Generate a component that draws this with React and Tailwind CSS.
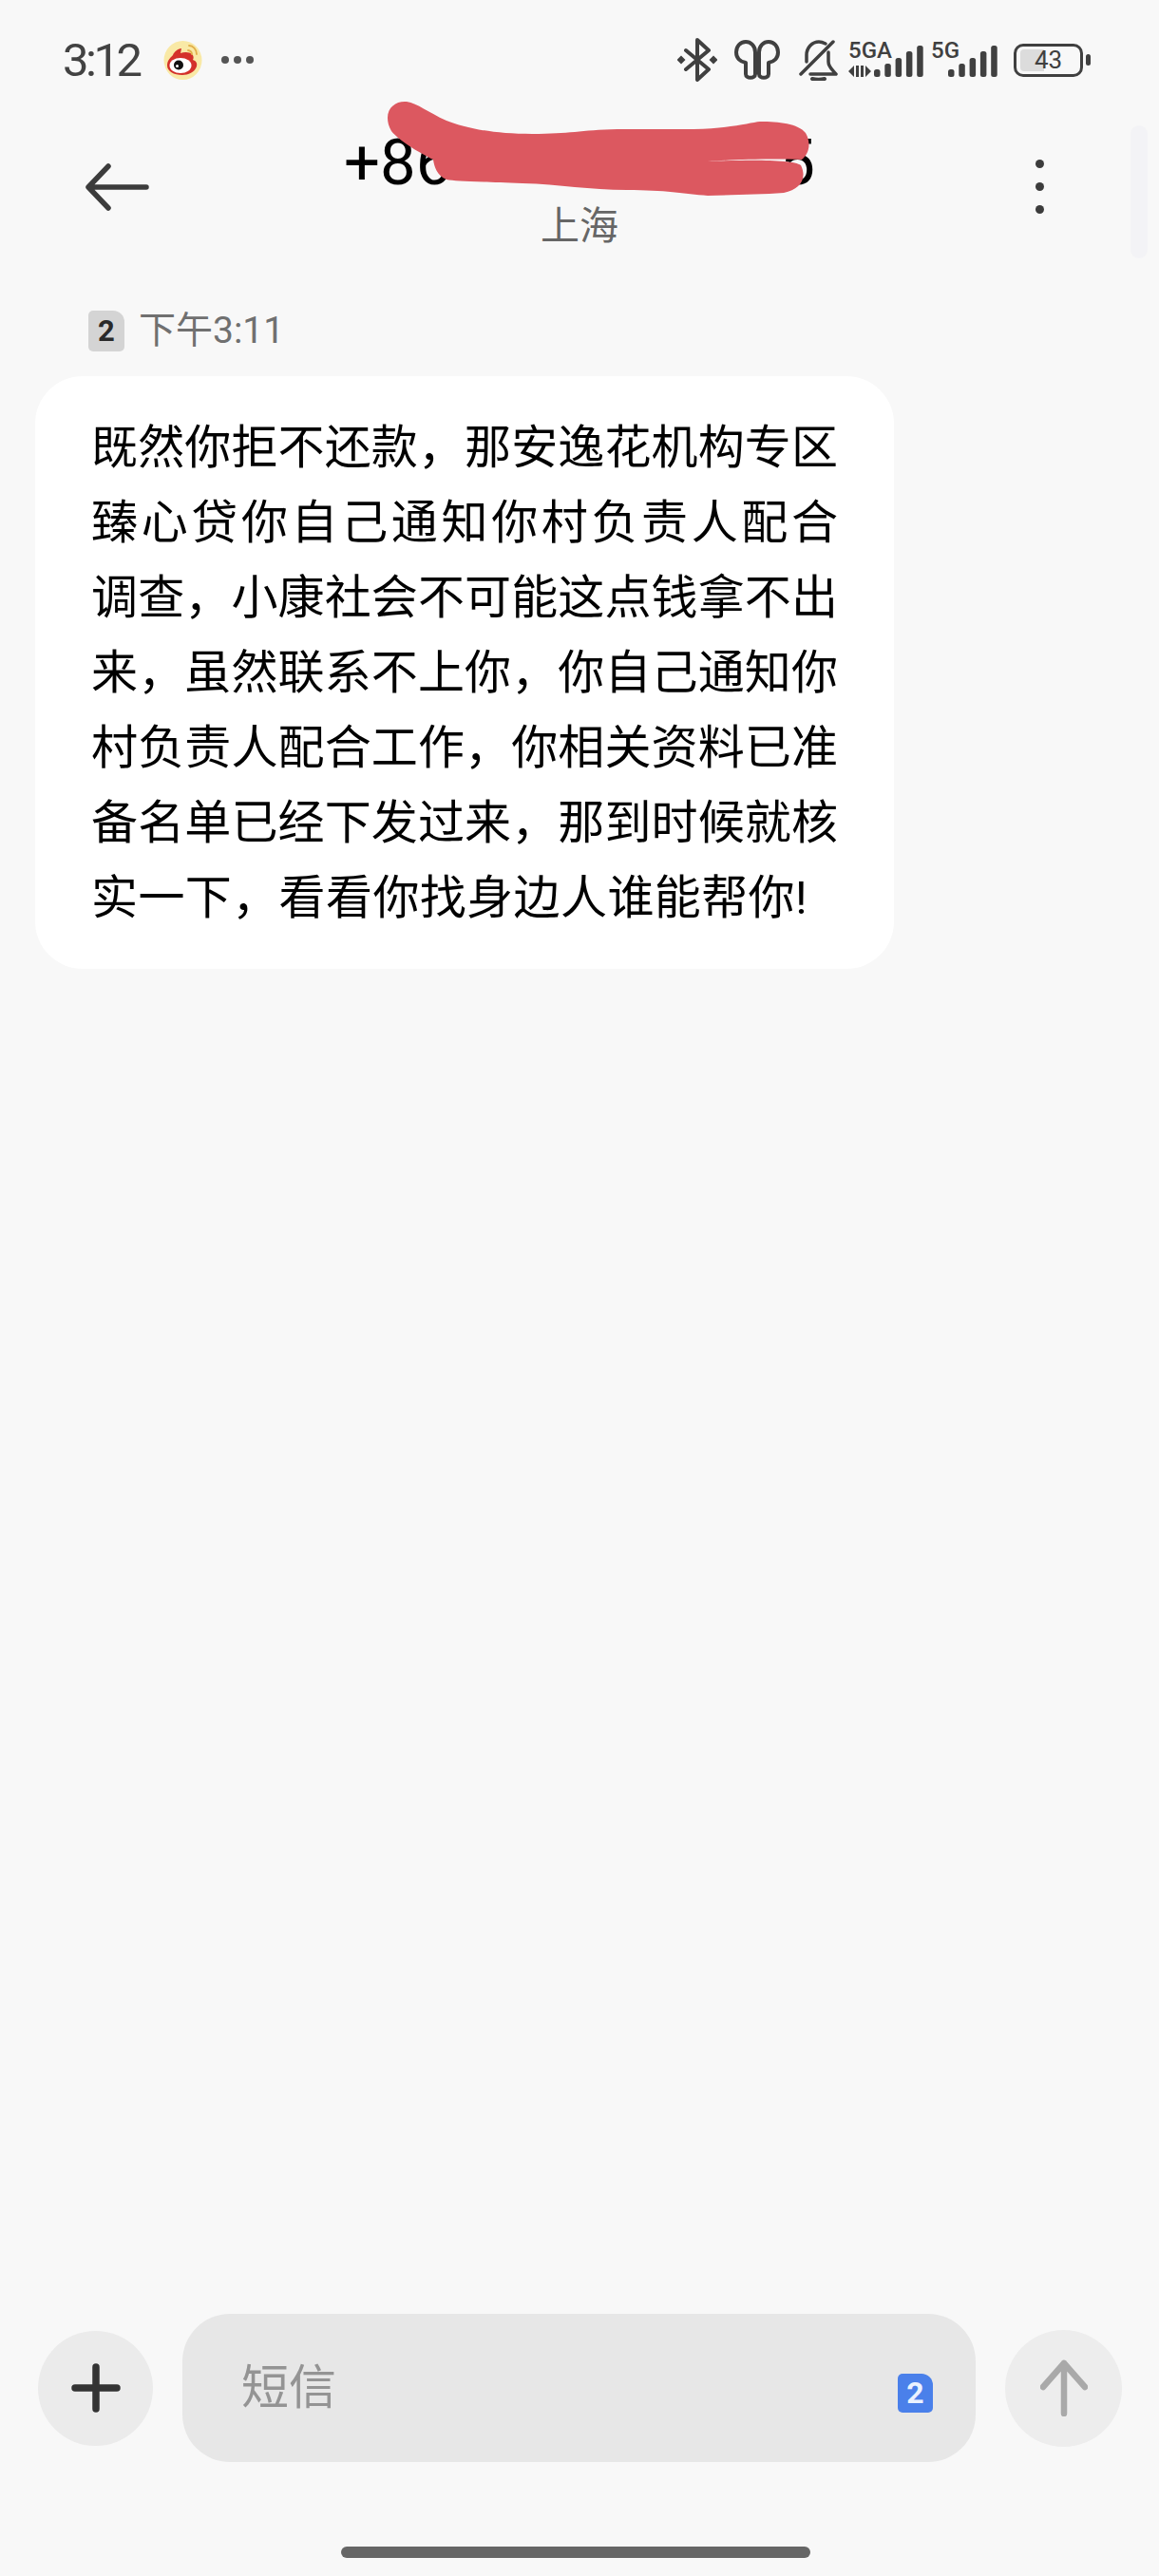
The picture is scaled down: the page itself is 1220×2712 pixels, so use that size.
const MESSAGE_LINES = [
  "既然你拒不还款，那安逸花机构专区",
  "臻心贷你自己通知你村负责人配合",
  "调查，小康社会不可能这点钱拿不出",
  "来，虽然联系不上你，你自己通知你",
  "村负责人配合工作，你相关资料已准",
  "备名单已经下发过来，那到时候就核",
];

const CJK = "font-['Roboto','Noto_Sans_CJK_SC',sans-serif]";
const BAR_HEIGHTS = [8, 14, 20, 27, 33];

function WeiboIcon() {
  return (
    <svg width="41" height="41" viewBox="0 0 41 41">
      <ellipse cx="20.500" cy="20.500" rx="20" ry="20.500" fill="#f9e9a6" />
      <path d="M4 26c0-5 3-8 6-11 1-3 5-7 9-7l-1 5c5-2 10-1 12 1 2 2 2 4 1 6 3 1 5 3 4 7-2 6-9 9-15 9-9 0-16-4-16-10z" fill="#d4312a" />
      <ellipse cx="18" cy="26" rx="11.500" ry="8" fill="#fff" />
      <circle cx="16" cy="25.500" r="5" fill="#111" />
      <circle cx="14.500" cy="26.500" r="1.500" fill="#fff" />
      <path d="M27 5c4 0 8 4 8 9M26 10c2 0 4 2 4 4" fill="none" stroke="#e2ae48" strokeWidth="1.800" strokeLinecap="round" />
    </svg>
  );
}

function BluetoothIcon() {
  return (
    <svg width="42" height="46" viewBox="0 0 42 46" fill="none">
      <path d="M9 13l24 20-12 11V2l12 11L9 33" stroke="#404040" strokeWidth="4" strokeLinejoin="round" strokeLinecap="round" />
      <path d="M4 18.500l4.500 4.500L4 27.500-.5 23zM38 18.500l4.500 4.500-4.500 4.500-4.500-4.500z" fill="#404040" />
    </svg>
  );
}

function EarbudsIcon() {
  return (
    <svg width="48" height="42" viewBox="0 0 48 42" fill="none" stroke="#404040" strokeWidth="4" strokeLinejoin="round">
      <path d="M22 13C22 6 17 2 12 2 6 2 2 7 2 13c0 6 4 10 10 11v12c0 5 10 5 10 0z" />
      <path d="M26 13c0-7 5-11 10-11 6 0 10 5 10 11 0 6-4 10-10 11v12c0 5-10 5-10 0z" />
    </svg>
  );
}

function BellOffIcon() {
  return (
    <svg width="41" height="44" viewBox="0 0 41 44" fill="none" stroke="#404040" strokeWidth="3.500" strokeLinecap="round" strokeLinejoin="round">
      <path d="M2 37L36 3" />
      <path d="M8 24v-7C8 9 14 3 21 3c3 0 5 1 7 2" />
      <path d="M31 14v10c0 6 5 9 8 13H12" />
      <path d="M14 42c4 1 9 1 13 0" strokeWidth="4" />
    </svg>
  );
}

// bars sit at the right end of the block, the network label goes on top of it
function NetworkSignal({ label, width, arrows = false }) {
  return (
    <div className="relative" style={{ width }}>
      <svg width={width} height="38" viewBox={`0 0 ${width} 38`} className="block">
        {arrows ? <path d="M6 25l-6 6 6 6zM8 25h3v12H8zM13 25h3v12h-3zM18 25l6 6-6 6z" fill="#404040" /> : null}
        {BAR_HEIGHTS.map((h, i) => (
          <rect key={h} x={width - 52 + i * 11.300} y={37 - h} width="6.500" height={h} rx="2.500" fill="#404040" />
        ))}
      </svg>
      <span className="absolute left-0 top-[-3px] font-['Roboto',sans-serif] text-[24px] font-medium leading-none text-[#404040]">{label}</span>
    </div>
  );
}

function StatusBar() {
  return (
    <div className="flex h-[126px] shrink-0 items-center justify-between pl-[66px] pr-[72px]">
      <div className="flex items-center">
        <span className="font-['Roboto',sans-serif] text-[49px] leading-none tracking-[-3.500px] text-[#424242]">3:12</span>
        <span className="ml-[26px] block h-[41px]"><WeiboIcon /></span>
        <span className="ml-[20px] flex gap-[5px]">
          <i className="size-[8px] rounded-full bg-[#555]" />
          <i className="size-[8px] rounded-full bg-[#555]" />
          <i className="size-[8px] rounded-full bg-[#555]" />
        </span>
      </div>
      <div className="flex items-center">
        <BluetoothIcon />
        <span className="ml-[18px] block h-[42px]"><EarbudsIcon /></span>
        <span className="ml-[20px] block h-[44px]"><BellOffIcon /></span>
        <span className="ml-[11px]"><NetworkSignal label="5GA" width={79} arrows /></span>
        <span className="ml-[8px]"><NetworkSignal label="5G" width={70} /></span>
        <div className="ml-[17px] flex items-center gap-[3px]">
          <div className="relative flex h-[35px] w-[73px] items-center justify-center rounded-[10px] border-[3.500px] border-[#404040]">
            <div className="absolute inset-y-[3px] left-[4px] w-[25px] rounded-l-[4px] bg-[#dcdcdc]" />
            <span className="relative font-['Roboto',sans-serif] text-[26px] leading-none text-[#404040]">43</span>
          </div>
          <div className="h-[12px] w-[5px] rounded-full bg-[#404040]" />
        </div>
      </div>
    </div>
  );
}

function Header() {
  return (
    <div className="relative flex h-[201px] shrink-0 items-start justify-between pl-[90px] pr-[121px]">
      <svg width="67" height="50" viewBox="0 0 67 50" fill="none" stroke="#3c3c3c" strokeWidth="5.500" strokeLinecap="round" strokeLinejoin="round" className="mt-[46px]">
        <path d="M64 25H4M24 3L3 25l21 22" />
      </svg>

      <div className="absolute inset-x-0 top-[10px] flex flex-col items-center">
        {/* the middle digits are scribbled out in the picture */}
        <div className="flex w-[496px] justify-between font-['Roboto',sans-serif] text-[67px] leading-[70px] text-black">
          <span>+86</span>
          <span>5</span>
        </div>
        <div className={`${CJK} mt-[7px] text-[41px] leading-[50px] text-[#666]`}>上海</div>
      </div>

      <svg className="absolute left-[400px] top-[-36px]" width="470" height="130" viewBox="400 90 470 130">
        <path
          d="M408 124C408 112 418 106 428 107 440 109 450 118 470 127 490 135 520 141 560 141 600 141 610 137 650 136L730 136C770 135 790 129 800 128 820 128 840 130 848 140 854 150 852 162 844 168 810 167 770 168 745 170 790 168 835 168 843 174 850 188 842 200 825 203 800 205 770 205 745 206 720 204 700 200 660 200 620 200 590 194 550 193 500 191 480 191 470 189 460 185 457 175 456 168 440 160 420 148 412 138 409 133 408 128 408 124Z"
          fill="#dc5860"
        />
      </svg>

      <div className="mt-[42px] flex flex-col gap-[15px]">
        <i className="size-[9px] rounded-full bg-[#3c3c3c]" />
        <i className="size-[9px] rounded-full bg-[#3c3c3c]" />
        <i className="size-[9px] rounded-full bg-[#3c3c3c]" />
      </div>
      <div className="absolute right-[12px] top-[6px] h-[140px] w-[18px] rounded-full bg-[#f3f3f6]" />
    </div>
  );
}

function SimBadge({ className, children }) {
  return (
    <span className={`flex items-center justify-center rounded-[5px] rounded-tr-[12px] font-['Roboto',sans-serif] font-bold leading-none ${className}`}>
      {children}
    </span>
  );
}

function Composer() {
  return (
    <div className="flex shrink-0 items-center pl-[40px] pr-[37px]">
      <button type="button" className="flex size-[121px] items-center justify-center rounded-full bg-[#ebebeb]">
        <svg width="52" height="52" viewBox="0 0 52 52" fill="none" stroke="#333" strokeWidth="7.500" strokeLinecap="round">
          <path d="M26 4v44M4 26h44" />
        </svg>
      </button>
      <div className="ml-[31px] flex h-[156px] w-[835px] items-center rounded-[50px] bg-[#e7e7e7] pl-[62px] pr-[45px]">
        <span className={`${CJK} text-[50px] text-[#949494]`}>短信</span>
        <SimBadge className="ml-auto mt-[10px] h-[41px] w-[37px] bg-[#4a80ea] text-[32px] text-[#eaf2ff]">2</SimBadge>
      </div>
      <button type="button" className="ml-[31px] flex size-[123px] items-center justify-center rounded-full bg-[#ededed]">
        <svg width="50" height="60" viewBox="0 0 50 60" fill="none" stroke="#a9a9a9" strokeWidth="6.500" strokeLinecap="round" strokeLinejoin="round">
          <path d="M25 57V4M3 29L25 4l22 25" />
        </svg>
      </button>
    </div>
  );
}

export default function App() {
  return (
    <div className="flex h-[2712px] w-[1220px] flex-col overflow-hidden bg-[#f8f8f8]">
      <StatusBar />
      <Header />

      <div className="flex-1 pl-[37px]">
        <div className="flex items-center pl-[56px]">
          <SimBadge className="h-[43px] w-[38px] bg-[#d4d4d4] text-[31px] text-[#2a2a2a]">2</SimBadge>
          <span className={`${CJK} ml-[15px] text-[39px] leading-[43px] text-[#707070]`}>下午3:11</span>
        </div>
        <div className={`${CJK} mt-[26px] w-[904px] rounded-[50px] bg-white pl-[59px] pt-[36px] pb-[35px] text-[49px] leading-[79px] text-black`}>
          {MESSAGE_LINES.map((line) => (
            <div key={line} className="w-[786px] [text-align-last:justify]">{line}</div>
          ))}
          <div className="tracking-[0.4px]">实一下，看看你找身边人谁能帮你!</div>
        </div>
      </div>

      <Composer />
      <div className="flex h-[120px] shrink-0 items-start justify-center pr-[8px] pt-[89px]">
        <div className="h-[12px] w-[494px] rounded-full bg-[#666]" />
      </div>
    </div>
  );
}
